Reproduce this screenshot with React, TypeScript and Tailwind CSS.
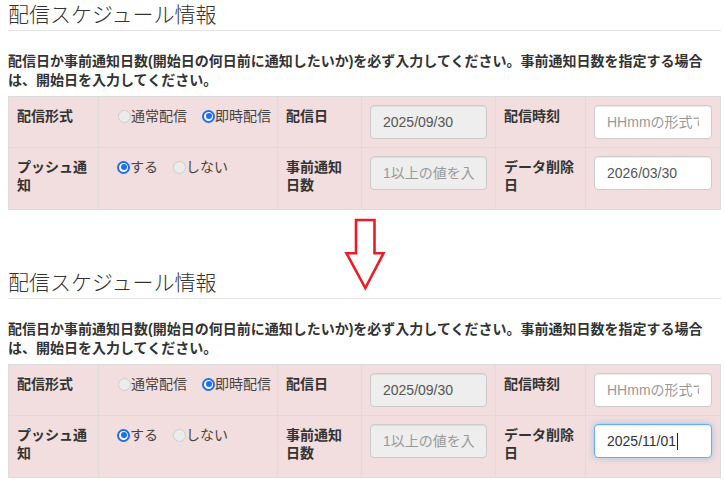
import type { ReactNode } from "react";

type Option = { label: string; checked: boolean };

function Radio({ checked }: { checked: boolean }) {
  if (checked) {
    return (
      <span className="flex h-[13px] w-[13px] shrink-0 items-center justify-center rounded-full border-2 border-[#1c6ff0] bg-white">
        <span className="h-[6px] w-[6px] rounded-full bg-[#1c6ff0]" />
      </span>
    );
  }
  return <span className="h-[13px] w-[13px] shrink-0 rounded-full border border-[#cfcfcf] bg-[#ececec]" />;
}

function RadioGroup({ options }: { options: Option[] }) {
  return (
    <div className="flex h-[18px] items-center gap-[15px]">
      {options.map((option) => (
        <label key={option.label} className="flex items-center text-[14px] text-[#444]">
          <Radio checked={option.checked} />
          <span>{option.label}</span>
        </label>
      ))}
    </div>
  );
}

function inputClass(disabled?: boolean) {
  return `h-[34px] w-full rounded-[4px] border border-[#ccc] px-3 text-[14px] text-[#555] shadow-[inset_0_1px_1px_rgba(0,0,0,0.075)] outline-none placeholder:text-[#999] ${
    disabled ? "bg-[#eee]" : "bg-white"
  }`;
}

function LabelCell({ children }: { children: ReactNode }) {
  return (
    <div className="border-b border-r border-[#ddd] px-2 pt-[10px] text-[14px] font-bold leading-[18px] text-[#333]">
      {children}
    </div>
  );
}

function FieldCell({ children }: { children: ReactNode }) {
  return <div className="border-b border-r border-[#ddd] p-2">{children}</div>;
}

function Section({ deleteDate, focused }: { deleteDate: string; focused?: boolean }) {
  return (
    <section>
      <h3 className="h-[31px] border-b border-[#e5e5e5] pt-[3px] text-[21px] font-light leading-[24px] text-[#333]">
        配信スケジュール情報
      </h3>

      <p className="mt-[21px] whitespace-nowrap text-[14px] font-bold leading-[18.5px] text-[#333]">
        配信日か事前通知日数(開始日の何日前に通知したいか)を必ず入力してください。事前通知日数を指定する場合
        <br />
        は、開始日を入力してください。
      </p>

      <div className="mt-[7px] grid grid-cols-[90px_179px_84px_134px_90px_135px] grid-rows-[51px_62px] border-l border-t border-[#ddd] bg-[#f2dede]">
        <LabelCell>配信形式</LabelCell>
        <div className="border-b border-r border-[#ddd] pl-[19px] pt-[10px]">
          <RadioGroup
            options={[
              { label: "通常配信", checked: false },
              { label: "即時配信", checked: true },
            ]}
          />
        </div>
        <LabelCell>配信日</LabelCell>
        <FieldCell>
          <input className={inputClass(true)} defaultValue="2025/09/30" readOnly />
        </FieldCell>
        <LabelCell>配信時刻</LabelCell>
        <FieldCell>
          <input className={inputClass()} placeholder="HHmmの形式で入力してください" />
        </FieldCell>

        <LabelCell>
          プッシュ通
          <br />
          知
        </LabelCell>
        <div className="border-b border-r border-[#ddd] pl-[18px] pt-[10px]">
          <RadioGroup
            options={[
              { label: "する", checked: true },
              { label: "しない", checked: false },
            ]}
          />
        </div>
        <LabelCell>
          事前通知
          <br />
          日数
        </LabelCell>
        <FieldCell>
          <input className={inputClass(true)} placeholder="1以上の値を入力してください" readOnly />
        </FieldCell>
        <LabelCell>
          データ削除
          <br />
          日
        </LabelCell>
        <FieldCell>
          {focused ? (
            <div className="flex h-[34px] w-full items-center rounded-[4px] border border-[#66afe9] bg-white px-3 text-[14px] text-[#333] shadow-[inset_0_1px_1px_rgba(0,0,0,0.075),0_0_6px_rgba(102,175,233,0.6)]">
              {deleteDate}
              <span className="ml-px h-[17px] w-px bg-[#222]" />
            </div>
          ) : (
            <input className={inputClass()} defaultValue={deleteDate} />
          )}
        </FieldCell>
      </div>
    </section>
  );
}

export default function App() {
  return (
    <div className="relative min-h-[484px] w-[725px] bg-white font-['Liberation_Sans','Noto_Sans_CJK_JP',sans-serif]">
      <div className="ml-[8px] w-[713px]">
        <Section deleteDate="2026/03/30" />
        <div className="h-[58px]" />
        <Section deleteDate="2025/11/01" focused />
      </div>

      <svg
        className="absolute left-[340px] top-[214px]"
        width="50"
        height="80"
        viewBox="0 0 50 80"
        fill="none"
      >
        <polygon
          points="16,6 34.5,6 34.5,39.3 43.5,39.3 25.3,74 6.5,39.3 16,39.3"
          stroke="#ed1c24"
          strokeWidth="2.6"
          strokeLinejoin="miter"
        />
      </svg>
    </div>
  );
}
